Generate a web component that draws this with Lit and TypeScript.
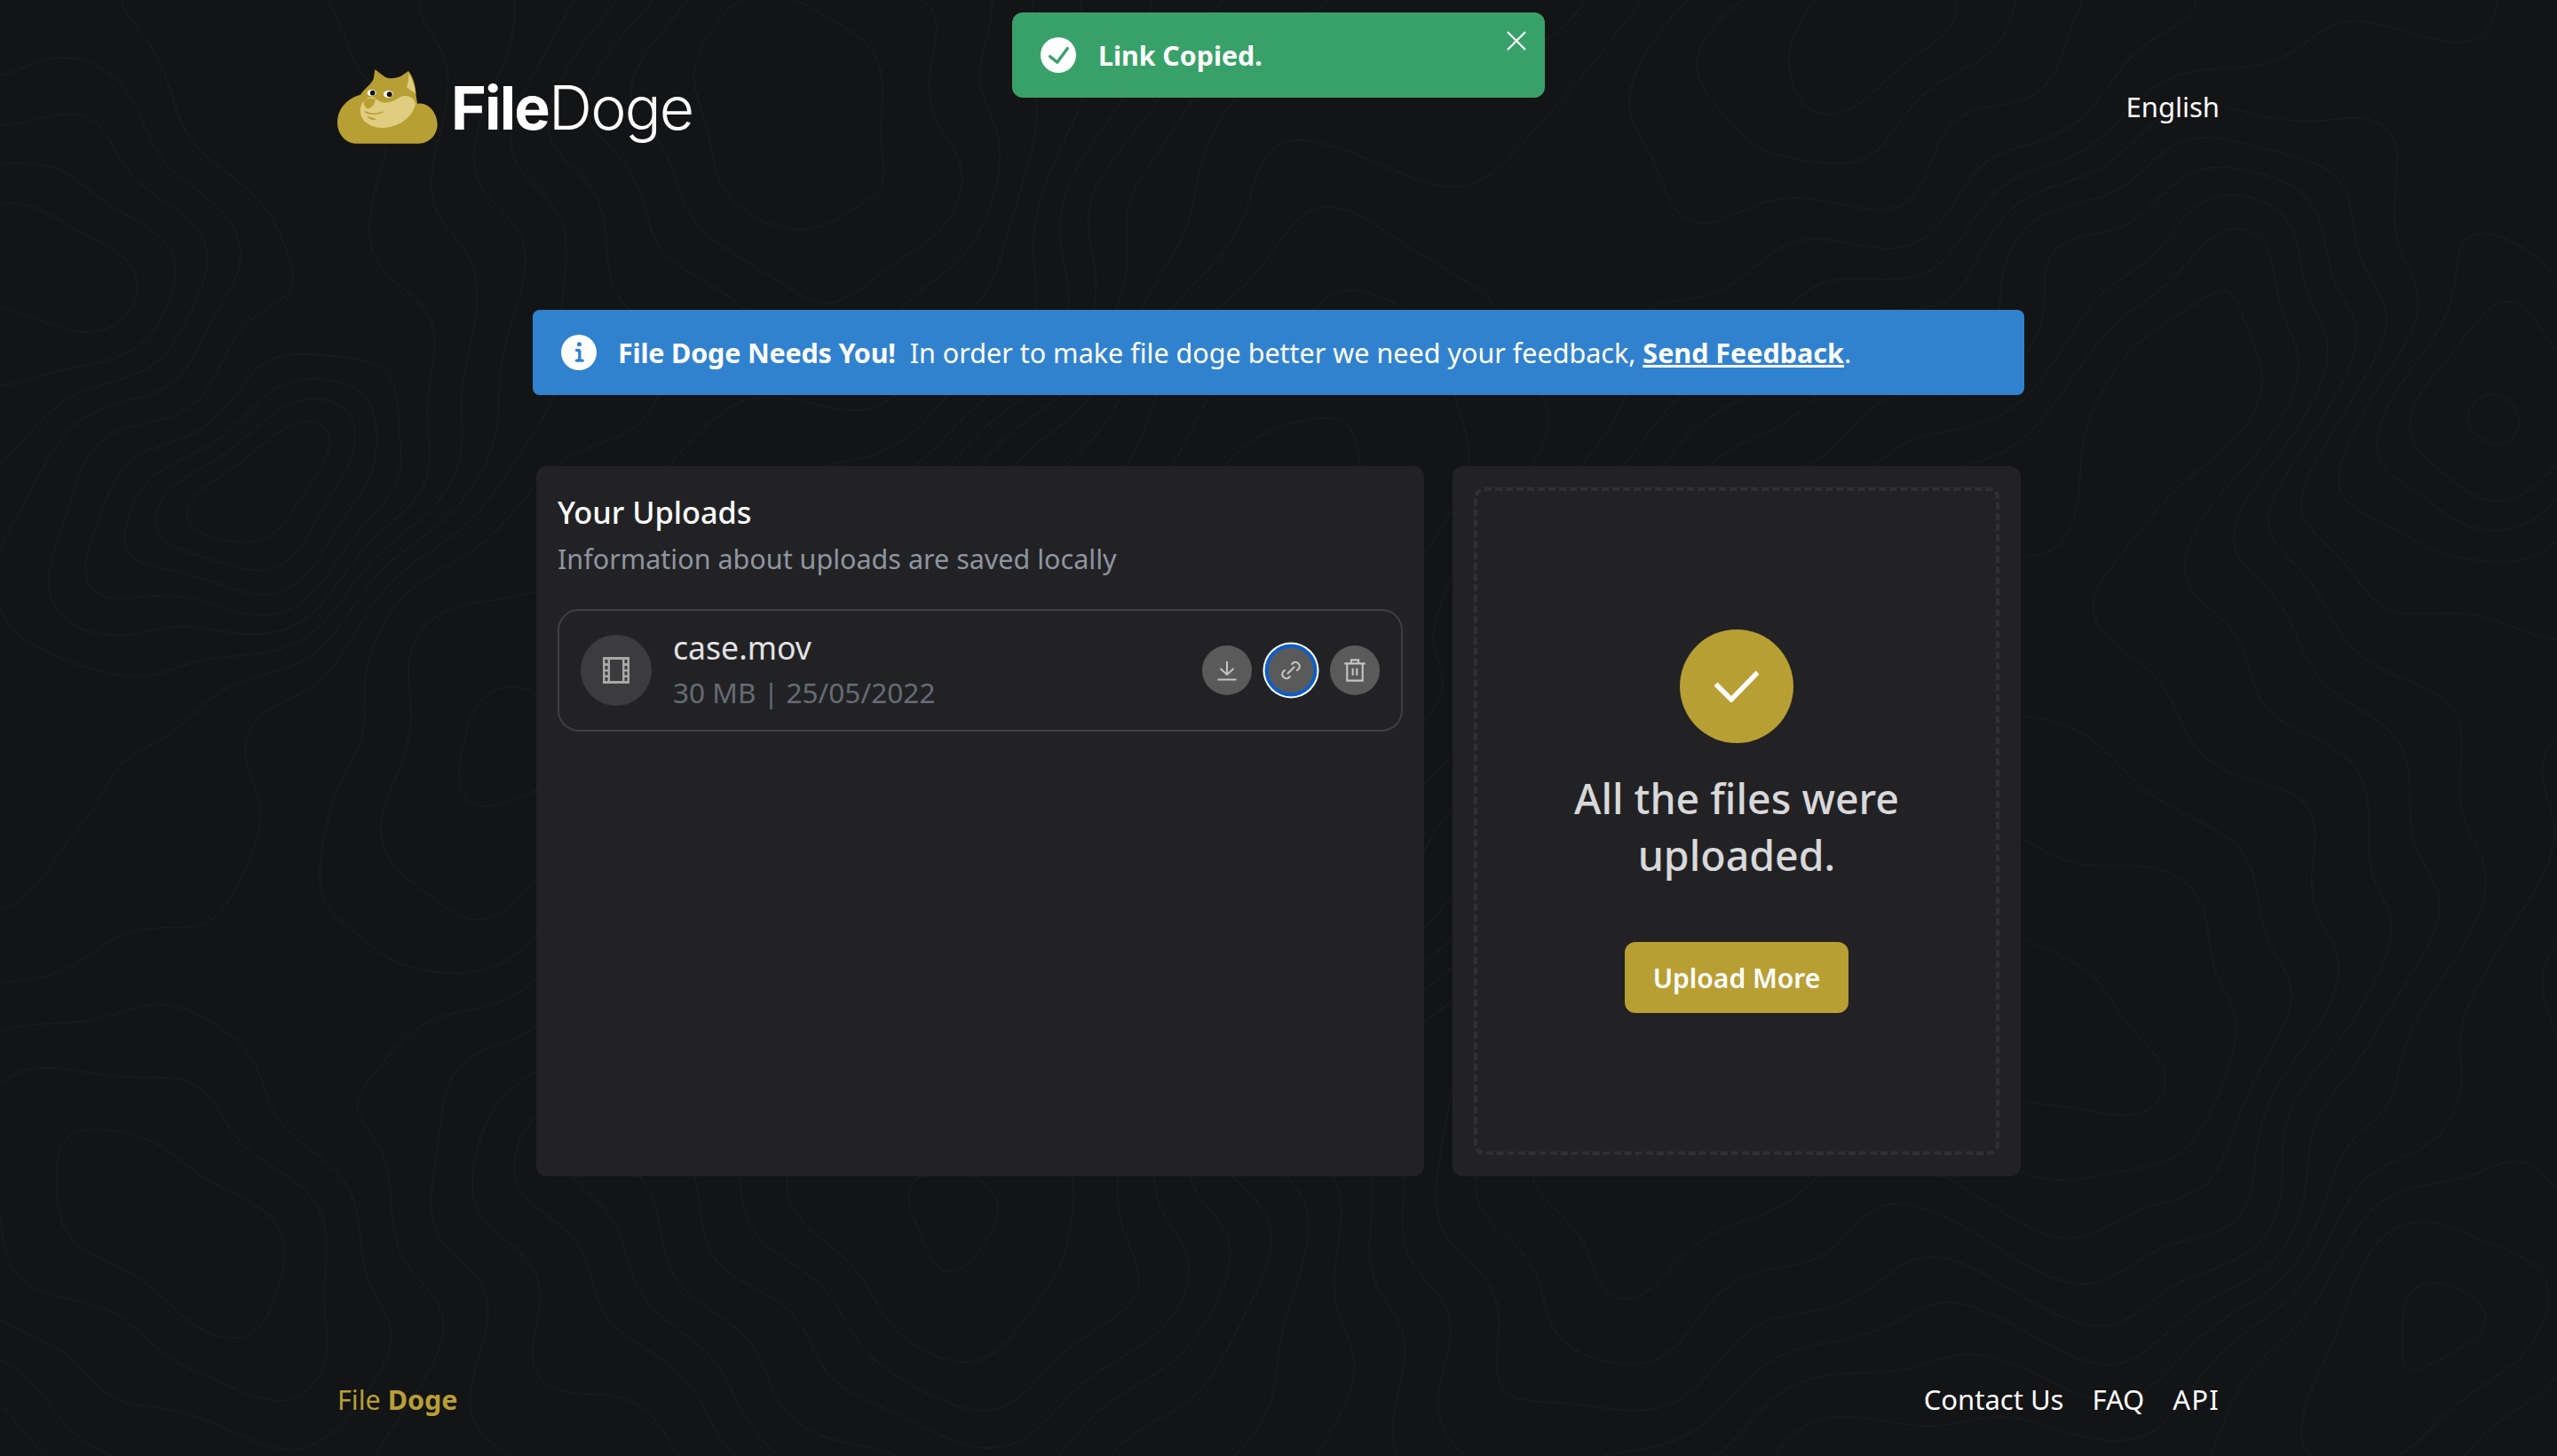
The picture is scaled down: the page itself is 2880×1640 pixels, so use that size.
import { LitElement, html, css, svg } from "lit";
import { customElement } from "lit/decorators.js";

function buildContours(): string {
  const W = 2880, H = 1640, S = 10;
  const peaks: [number, number, number, number][] = [
    [230, 610, 0.6, 120], [360, 500, 0.5, 100], [2770, 500, 0.7, 150], [200, 1400, -0.6, 200],
    [900, 150, -0.7, 240], [1500, 230, 0.5, 260], [2100, 110, 0.6, 220], [2500, 1200, -0.7, 240],
    [1050, 1450, 0.6, 260], [1800, 1480, -0.5, 240], [2700, 1500, 0.6, 170], [60, 300, -0.5, 150],
    [600, 1000, -0.5, 220], [1400, 900, 0.5, 300], [2050, 800, -0.5, 300], [2450, 300, -0.5, 160],
  ];
  const f = (x0: number, y0: number) => {
    const x = x0 + 34 * Math.sin(y0 / 85) + 16 * Math.sin(y0 / 37 + x0 / 60);
    const y = y0 + 34 * Math.sin(x0 / 105 + 0.7) + 16 * Math.sin(x0 / 41 - y0 / 70);
    let v = 0.14 * Math.sin(x / 330 + y / 210) + 0.12 * Math.sin(y / 150 - x / 420 + 1.3);
    for (const [px, py, a, s] of peaks) {
      const d = (x - px) ** 2 + (y - py) ** 2;
      v += a * Math.exp(-d / (2 * s * s));
    }
    return v;
  };
  const cols = Math.ceil(W / S) + 1, rows = Math.ceil(H / S) + 1;
  const grid = new Float64Array(cols * rows);
  for (let j = 0; j < rows; j++) for (let i = 0; i < cols; i++) grid[j * cols + i] = f(i * S, j * S);
  let out = "";
  for (let lv = -1.2; lv < 1.6; lv += 0.1) {
    for (let j = 0; j < rows - 1; j++) {
      for (let i = 0; i < cols - 1; i++) {
        const a = grid[j * cols + i], b = grid[j * cols + i + 1];
        const c = grid[(j + 1) * cols + i + 1], d = grid[(j + 1) * cols + i];
        const pts: [number, number][] = [];
        const x = i * S, y = j * S;
        if (a < lv !== b < lv) pts.push([x + (S * (lv - a)) / (b - a), y]);
        if (b < lv !== c < lv) pts.push([x + S, y + (S * (lv - b)) / (c - b)]);
        if (d < lv !== c < lv) pts.push([x + (S * (lv - d)) / (c - d), y + S]);
        if (a < lv !== d < lv) pts.push([x, y + (S * (lv - a)) / (d - a)]);
        if (pts.length >= 2) {
          out += `M${pts[0][0].toFixed(1)} ${pts[0][1].toFixed(1)}L${pts[1][0].toFixed(1)} ${pts[1][1].toFixed(1)}`;
          if (pts.length === 4) out += `M${pts[2][0].toFixed(1)} ${pts[2][1].toFixed(1)}L${pts[3][0].toFixed(1)} ${pts[3][1].toFixed(1)}`;
        }
      }
    }
  }
  return out;
}
const contourPath = buildContours();

const GOLD = "#b89f34";

const logo = svg`<svg class="logo-mark" viewBox="0 0 339 252" aria-hidden="true">
  <g transform="translate(-30 -39)">
    <path fill="${GOLD}" d="M92 290C52 288 28 250 30 215C33 165 70 135 108 125C120 105 145 90 152 72L157 40C172 50 188 66 200 69C218 71 232 68 245 62L270 45C286 62 296 100 296 128L300 155C340 148 368 190 368 225C368 262 338 290 305 290Z"/>
    <path fill="#e0cd80" d="M108 170C106 190 112 208 128 220C150 238 185 242 215 232C255 220 288 192 294 155C290 135 268 125 250 130C232 136 222 150 195 152C170 152 160 138 150 132C130 134 110 150 108 170Z"/>
    <path fill="#e0cd80" d="M270 52C282 70 292 100 294 122C284 112 270 106 264 98C270 86 272 68 270 52Z"/>
    <path fill="${GOLD}" d="M120 148C124 140 146 134 158 140C156 158 146 172 130 172C122 168 118 158 120 148Z"/>
    <path fill="none" stroke="${GOLD}" stroke-width="5" stroke-linecap="round" d="M125 183C140 193 165 192 182 184"/>
    <path fill="${GOLD}" d="M130 198C142 200 155 204 162 208C150 214 136 208 130 198Z"/>
    <ellipse cx="146" cy="119" rx="15" ry="11" fill="#fff"/><circle cx="149" cy="119" r="8.500" fill="#111"/>
    <ellipse cx="202" cy="123" rx="16" ry="12" fill="#fff"/><circle cx="206" cy="124" r="9" fill="#111"/>
  </g>
</svg>`;

const iconCheckFill = svg`<svg class="ico40" viewBox="0 0 24 24"><path fill="#fff" d="M12,0A12,12,0,1,0,24,12,12.014,12.014,0,0,0,12,0Zm6.927,8.2-6.845,9.289a1.011,1.011,0,0,1-1.43.188L5.764,13.769a1,1,0,1,1,1.25-1.562l4.076,3.261,6.227-8.451A1,1,0,1,1,18.927,8.2Z"/></svg>`;
const iconInfo = svg`<svg class="ico40" viewBox="0 0 24 24"><path fill="#fff" d="M12,0A12,12,0,1,0,24,12,12.013,12.013,0,0,0,12,0Zm.25,5a1.5,1.5,0,1,1-1.5,1.5A1.5,1.5,0,0,1,12.25,5ZM14.5,18.5h-4a1,1,0,0,1,0-2h.75a.25.25,0,0,0,.25-.25v-4.5a.25.25,0,0,0-.25-.25H10.5a1,1,0,0,1,0-2h1a2,2,0,0,1,2,2v4.75a.25.25,0,0,0,.25.25h.75a1,1,0,1,1,0,2Z"/></svg>`;
const iconClose = svg`<svg class="close" viewBox="0 0 24 24"><path fill="none" stroke="#fff" stroke-width="2.200" d="M2 2L22 22M22 2L2 22"/></svg>`;
const iconFilm = svg`<svg class="film" viewBox="0 0 30 30"><path fill="#a8a8a8" fill-rule="evenodd" d="M0 0H30V30H0ZM8 3V27H22V3ZM2.500 3V7H5.500V3ZM2.500 10V14H5.500V10ZM2.500 16.500V20.500H5.500V16.500ZM2.500 23V27H5.500V23ZM24.500 3V7H27.500V3ZM24.500 10V14H27.500V10ZM24.500 16.500V20.500H27.500V16.500ZM24.500 23V27H27.500V23Z"/></svg>`;
const iconDownload = svg`<svg class="act" viewBox="0 0 28 28"><path fill="none" stroke="#c4c4c4" stroke-width="2" d="M14 4V19M6.500 12L14 19L21.500 12M3.500 24.500H24.500"/></svg>`;
const iconLink = svg`<svg class="act" viewBox="0 0 24 24"><path fill="none" stroke="#c4c4c4" stroke-width="1.800" stroke-linecap="round" d="M9 15L15 9M13 6L14.500 4.500A4.200 4.200 0 0 1 20 10L18 12M11 18L9.500 19.500A4.200 4.200 0 0 1 4 14L6 12"/></svg>`;
const iconTrash = svg`<svg class="act" viewBox="0 0 24 24"><path fill="none" stroke="#c4c4c4" stroke-width="1.800" d="M2 5.500H22M8.500 5.500V2H15.500V5.500M4.500 5.500V22H19.500V5.500M10 10V17M14 10V17"/></svg>`;
const iconCheck = svg`<svg class="big-check" viewBox="0 0 50 36"><path fill="none" stroke="#fff" stroke-width="5.500" d="M1.500 15.500L19 33L48.500 2.500"/></svg>`;

@customElement("app-root")
export class AppRoot extends LitElement {
  static styles = css`
    :host {
      display: block;
      position: relative;
      min-height: 100vh;
      overflow: hidden;
      background: #131416;
      color: #fff;
      font-family: "Noto Sans", "Liberation Sans", sans-serif;
    }
    .bg { position: absolute; inset: 0; width: 100%; height: 100%; }
    .bg path { fill: none; stroke: #18191b; stroke-width: 2; }
    .page {
      position: relative;
      display: flex;
      flex-direction: column;
      align-items: center;
      min-height: 1640px;
      box-sizing: border-box;
    }
    header {
      width: 2120px;
      height: 84px;
      margin-top: 78px;
      display: flex;
      justify-content: space-between;
      align-items: center;
    }
    .brand { display: flex; align-items: center; gap: 15px; }
    .logo-mark { width: 113px; height: 84px; display: block; }
    .wordmark {
      font-family: Inter, sans-serif;
      font-size: 68px;
      line-height: 84px;
      letter-spacing: -1.800px;
      font-weight: 300;
      height: 84px;
      margin-top: 1px;
    }
    .wordmark b { font-weight: 700; }
    .lang { font-size: 31px; line-height: 48px; }
    .toast {
      position: absolute;
      left: 1140px;
      top: 14px;
      width: 600px;
      height: 96px;
      box-sizing: border-box;
      background: #38a169;
      border-radius: 12px;
      display: flex;
      align-items: center;
      padding: 0 32px;
      gap: 25px;
      font-weight: 700;
      font-size: 30.300px;
    }
    .ico40 { width: 40px; height: 40px; display: block; flex: none; }
    .close { position: absolute; width: 24px; height: 24px; right: 20px; top: 20px; }
    .banner {
      width: 1680px;
      height: 96px;
      box-sizing: border-box;
      margin-top: 187px;
      background: #3182ce;
      border-radius: 8px;
      display: flex;
      align-items: center;
      padding: 0 32px;
      gap: 24px;
      font-size: 30.500px;
    }
    .banner b { font-weight: 700; margin-right: 16px; letter-spacing: -0.200px; }
    .banner a { color: #fff; font-weight: 700; text-decoration: underline; }
    .panels { display: flex; gap: 32px; margin-top: 80px; }
    .panel {
      background: #222224;
      border-radius: 12px;
      height: 800px;
      box-sizing: border-box;
      padding: 24px;
    }
    .uploads { width: 1000px; }
    h2 { margin: 0; font-size: 34.300px; line-height: 56px; font-weight: 500; }
    .sub { margin: 0; font-size: 30.500px; line-height: 48px; color: #8f95a1; }
    .item {
      margin-top: 33px;
      height: 138px;
      box-sizing: border-box;
      border: 2px solid #3f3f42;
      border-radius: 24px;
      padding: 0 24px;
      display: flex;
      align-items: center;
    }
    .thumb {
      width: 80px;
      height: 80px;
      border-radius: 50%;
      background: #3c3c3e;
      display: flex;
      align-items: center;
      justify-content: center;
      flex: none;
    }
    .film { width: 30px; height: 30px; display: block; }
    .meta { margin-left: 24px; flex: 1; }
    .name { font-size: 35.600px; line-height: 50px; color: #e2e2e4; }
    .info { font-size: 31.600px; line-height: 52px; color: #666b76; }
    .actions { display: flex; gap: 16px; }
    .btn {
      width: 56px;
      height: 56px;
      border-radius: 50%;
      background: #5a5a5b;
      display: flex;
      align-items: center;
      justify-content: center;
    }
    .btn.focus {
      box-shadow: inset 0 0 0 2.500px #0b5fcc, 0 0 0 1.500px #0b5fcc, 0 0 0 3.500px #fff;
    }
    .act { width: 28px; height: 28px; display: block; }
    .done { width: 640px; padding: 24px; }
    .dash {
      height: 100%;
      box-sizing: border-box;
      border: 4px dashed #303033;
      border-radius: 12px;
      display: flex;
      flex-direction: column;
      align-items: center;
      padding-top: 156px;
    }
    .circle {
      width: 128px;
      height: 128px;
      border-radius: 50%;
      background: #b89f34;
      display: flex;
      align-items: center;
      justify-content: center;
    }
    .big-check { width: 50px; height: 36px; display: block; }
    .msg {
      margin: 30px 0 0;
      text-align: center;
      width: 400px;
      font-size: 46.500px;
      line-height: 64px;
      font-weight: 500;
      color: #d8d8da;
    }
    .upload {
      margin-top: 66px;
      width: 252px;
      height: 80px;
      border-radius: 12px;
      background: #b89f34;
      display: flex;
      align-items: center;
      justify-content: center;
      font-size: 30px;
      font-weight: 600;
    }
    footer {
      position: absolute;
      left: 380px;
      top: 1552px;
      width: 2120px;
      display: flex;
      justify-content: space-between;
      font-size: 31px;
      line-height: 48px;
    }
    .copy { color: #b89f34; font-size: 30.500px; }
    .copy b { font-weight: 700; }
    nav { display: flex; gap: 32px; }
    .api { letter-spacing: 1.200px; }
  `;

  render() {
    return html`
      <svg class="bg" viewBox="0 0 2880 1640" aria-hidden="true"><path d=${contourPath}></path></svg>
      <div class="page">
        <header>
          <div class="brand">${logo}<div class="wordmark"><b>File</b>Doge</div></div>
          <div class="lang">English</div>
        </header>
        <div class="banner">
          ${iconInfo}
          <div><b>File Doge Needs You!</b>In order to make file doge better we need your feedback, <a>Send Feedback</a>.</div>
        </div>
        <div class="panels">
          <section class="panel uploads">
            <h2>Your Uploads</h2>
            <p class="sub">Information about uploads are saved locally</p>
            <div class="item">
              <div class="thumb">${iconFilm}</div>
              <div class="meta">
                <div class="name">case.mov</div>
                <div class="info">30 MB | 25/05/2022</div>
              </div>
              <div class="actions">
                <div class="btn">${iconDownload}</div>
                <div class="btn focus">${iconLink}</div>
                <div class="btn">${iconTrash}</div>
              </div>
            </div>
          </section>
          <section class="panel done">
            <div class="dash">
              <div class="circle">${iconCheck}</div>
              <p class="msg">All the files were uploaded.</p>
              <div class="upload">Upload More</div>
            </div>
          </section>
        </div>
        <footer>
          <div class="copy">File <b>Doge</b></div>
          <nav><span>Contact Us</span><span>FAQ</span><span class="api">API</span></nav>
        </footer>
      </div>
      <div class="toast">${iconCheckFill}<span>Link Copied.</span>${iconClose}</div>
    `;
  }
}
